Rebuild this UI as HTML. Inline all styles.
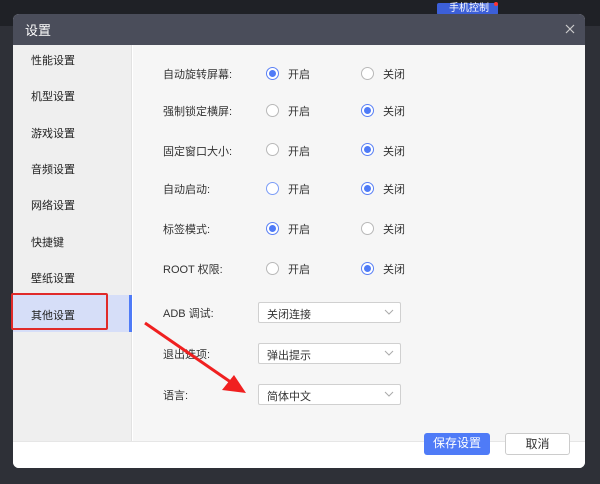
<!DOCTYPE html>
<html><head><meta charset="utf-8"><style>
*{margin:0;padding:0;box-sizing:border-box}
body{width:600px;height:484px;background:#2e3037;font-family:"Liberation Sans","Noto Sans CJK SC",sans-serif;position:relative;overflow:hidden;font-size:11px;color:#333}
.top{position:absolute;left:0;top:0;width:600px;height:26px;background:#1f2126}
.dlg{position:absolute;left:13px;top:14px;width:572px;height:454px;border-radius:6px;overflow:hidden;background:#fff}
.tb{height:31px;background:#4a4d5a;color:#fff;font-size:13px;padding:6px 0 0 12px;position:relative}
.side{position:absolute;left:0;top:31px;width:119px;height:396px;background:#efefef;border-right:1px solid #e2e2e2}
.side div{position:absolute;left:18px;font-size:11px;color:#222}
.main{position:absolute;left:120px;top:31px;width:452px;height:396px;background:#f6f6f6}
.foot{position:absolute;left:0;top:427px;width:572px;height:27px;background:#fff;border-top:1px solid #e6e6e6}
.a{position:absolute;font-size:11px;color:#333;white-space:nowrap}
.r{position:absolute;width:13px;height:13px;border:1px solid #b8b8b8;border-radius:50%;background:#fff}
.r.on{border-color:#5a80f5}
.r.on:after{content:"";position:absolute;left:2px;top:2px;width:7px;height:7px;border-radius:50%;background:#4f7bf7}
.sel{position:absolute;left:258px;width:143px;height:21px;border:1px solid #d0d0d0;border-radius:2px;background:#fff;font-size:11px;padding:3px 0 0 8px}
.sel svg{position:absolute;right:6px;top:6px}
.btn{position:absolute;top:433px;height:22px;border-radius:3px;font-size:12px;text-align:center;line-height:21px}
</style></head><body>
<div class="top"></div>
<div style="position:absolute;left:437px;top:3px;width:61px;height:12px;background:#3c5fd8;border-radius:2px;color:#fff;font-size:10px;line-height:12px;padding-left:12px">手机控制</div>
<div style="position:absolute;left:494px;top:2px;width:4px;height:4px;border-radius:50%;background:#f33"></div>
<div class="dlg">
<div class="tb">设置<svg style="position:absolute;right:10px;top:10px" width="10" height="10"><path d="M1 1L9 9M9 1L1 9" stroke="#ccc" stroke-width="1.2"/></svg></div>
<div class="side">
<div style="top:7px">性能设置</div><div style="top:43px">机型设置</div><div style="top:80px">游戏设置</div><div style="top:116px">音频设置</div><div style="top:152px">网络设置</div><div style="top:189px">快捷键</div><div style="top:225px">壁纸设置</div>
<div style="left:0;top:250px;width:119px;height:37px;background:#d6def8;border-right:3px solid #4f7bf7"></div>
<div style="top:262px">其他设置</div>
</div>
<div class="main"></div>
<div class="foot"></div>
</div>
<div style="position:absolute;left:11px;top:293px;width:97px;height:37px;border:2px solid #e02a2a;border-radius:2px"></div>
<div class="a" style="left:163px;top:66px">自动旋转屏幕:</div>
<div class="a" style="left:163px;top:103px">强制锁定横屏:</div>
<div class="a" style="left:163px;top:143px">固定窗口大小:</div>
<div class="a" style="left:163px;top:181px">自动启动:</div>
<div class="a" style="left:163px;top:221px">标签模式:</div>
<div class="a" style="left:163px;top:261px">ROOT 权限:</div>
<div class="r on" style="left:266px;top:67px"></div><div class="r" style="left:361px;top:67px"></div>
<div class="r" style="left:266px;top:104px"></div><div class="r on" style="left:361px;top:104px"></div>
<div class="r" style="left:266px;top:143px"></div><div class="r on" style="left:361px;top:143px"></div>
<div class="r" style="left:266px;top:182px;border-color:#7b9cf7"></div><div class="r on" style="left:361px;top:182px"></div>
<div class="r on" style="left:266px;top:222px"></div><div class="r" style="left:361px;top:222px"></div>
<div class="r" style="left:266px;top:262px"></div><div class="r on" style="left:361px;top:262px"></div>
<div class="a" style="left:288px;top:66px">开启</div><div class="a" style="left:383px;top:66px">关闭</div>
<div class="a" style="left:288px;top:103px">开启</div><div class="a" style="left:383px;top:103px">关闭</div>
<div class="a" style="left:288px;top:143px">开启</div><div class="a" style="left:383px;top:143px">关闭</div>
<div class="a" style="left:288px;top:181px">开启</div><div class="a" style="left:383px;top:181px">关闭</div>
<div class="a" style="left:288px;top:221px">开启</div><div class="a" style="left:383px;top:221px">关闭</div>
<div class="a" style="left:288px;top:261px">开启</div><div class="a" style="left:383px;top:261px">关闭</div>
<div class="a" style="left:163px;top:305px">ADB 调试:</div>
<div class="a" style="left:163px;top:346px">退出选项:</div>
<div class="a" style="left:163px;top:387px">语言:</div>
<div class="sel" style="top:302px">关闭连接<svg width="10" height="6"><path d="M1 1l4 4 4-4" stroke="#aaa" fill="none"/></svg></div>
<div class="sel" style="top:343px">弹出提示<svg width="10" height="6"><path d="M1 1l4 4 4-4" stroke="#aaa" fill="none"/></svg></div>
<div class="sel" style="top:384px">简体中文<svg width="10" height="6"><path d="M1 1l4 4 4-4" stroke="#aaa" fill="none"/></svg></div>
<svg style="position:absolute;left:0;top:0" width="600" height="484"><path d="M145 323L232 383" stroke="#f02020" stroke-width="3"/><path d="M246 393L222 390L234 375Z" fill="#f02020"/></svg>
<div class="btn" style="left:424px;width:66px;background:#4f7bf7;color:#fff">保存设置</div>
<div class="btn" style="left:505px;width:65px;border:1px solid #ccc;background:#fff;color:#333">取消</div>
</body></html>
